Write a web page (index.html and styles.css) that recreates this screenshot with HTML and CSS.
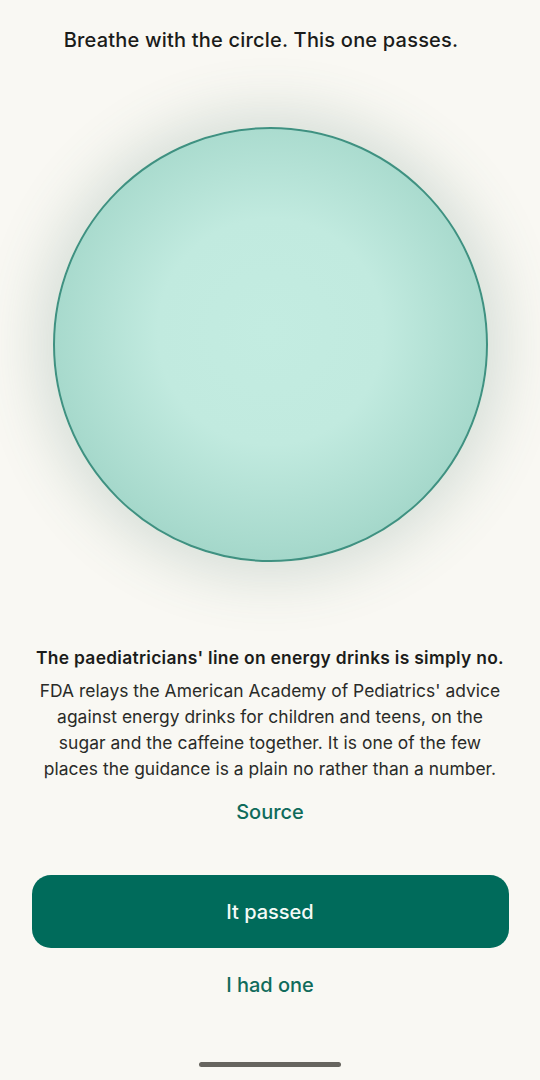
FILE: index.html
```html
<!DOCTYPE html>
<html>
<head>
<meta charset="utf-8">
<link rel="stylesheet" href="styles.css">
</head>
<body>
<div class="screen">
  <h1 class="title">Breathe with the circle. This one passes.</h1>
  <div class="stage">
    <div class="circle"></div>
  </div>
  <div class="fact">
    <h2 class="fact-head">The paediatricians' line on energy drinks is simply no.</h2>
    <p class="fact-body">FDA relays the American Academy of Pediatrics' advice against energy drinks for children and teens, on the sugar and the caffeine together. It is one of the few places the guidance is a plain no rather than a number.</p>
    <a class="source">Source</a>
  </div>
  <button class="primary">It passed</button>
  <button class="secondary">I had one</button>
  <div class="home-bar"></div>
</div>
</body>
</html>
```
FILE: styles.css
```css
html, body {
  margin: 0;
  padding: 0;
  background: #f9f8f3;
}
.screen {
  width: 540px;
  height: 1080px;
  display: flex;
  flex-direction: column;
  align-items: center;
  font-family: "Inter", "Noto Sans", sans-serif;
  color: #1b1c1a;
  box-sizing: border-box;
  padding-top: 27px;
}
.title {
  margin: 0;
  padding-right: 18px;
  font-size: 20px;
  font-weight: 500;
  line-height: 26px;
  letter-spacing: 0.2px;
}
.stage {
  margin-top: 73px;
  width: 540px;
  height: 436px;
  display: flex;
  justify-content: center;
  align-items: center;
}
.circle {
  width: 431px;
  height: 431px;
  border-radius: 50%;
  border: 2px solid #3f9181;
  background: radial-gradient(circle at 50% 47%, #c3ece1 0%, #c1eadf 36%, #a8dacd 68%, #8bc6b8 100%);
  box-shadow: 0 0 56px 16px rgba(70, 115, 100, 0.19);
}
.fact {
  margin-top: 84px;
  display: flex;
  flex-direction: column;
  align-items: center;
  width: 490px;
  text-align: center;
}
.fact-head {
  margin: 0;
  font-size: 17.4px;
  font-weight: 600;
  line-height: 24px;
  letter-spacing: 0.3px;
}
.fact-body {
  margin: 8px 0 0;
  width: 470px;
  font-size: 17.4px;
  font-weight: 400;
  line-height: 26px;
  color: #2a2b28;
  letter-spacing: 0.05px;
}
.source {
  margin-top: 17px;
  font-size: 20px;
  font-weight: 500;
  color: #106b5b;
  line-height: 26px;
}
.primary {
  margin-top: 50px;
  width: 477px;
  height: 73px;
  border: none;
  border-radius: 19px;
  background: #006b5b;
  color: #f4faf6;
  font-family: inherit;
  font-size: 20px;
  font-weight: 500;
}
.secondary {
  margin-top: 24px;
  border: none;
  background: transparent;
  color: #106b5b;
  font-family: inherit;
  font-size: 20px;
  font-weight: 500;
  line-height: 26px;
  padding: 0;
}
.home-bar {
  margin-top: auto;
  margin-bottom: 13px;
  width: 142px;
  height: 5px;
  border-radius: 3px;
  background: #67655f;
}
```
